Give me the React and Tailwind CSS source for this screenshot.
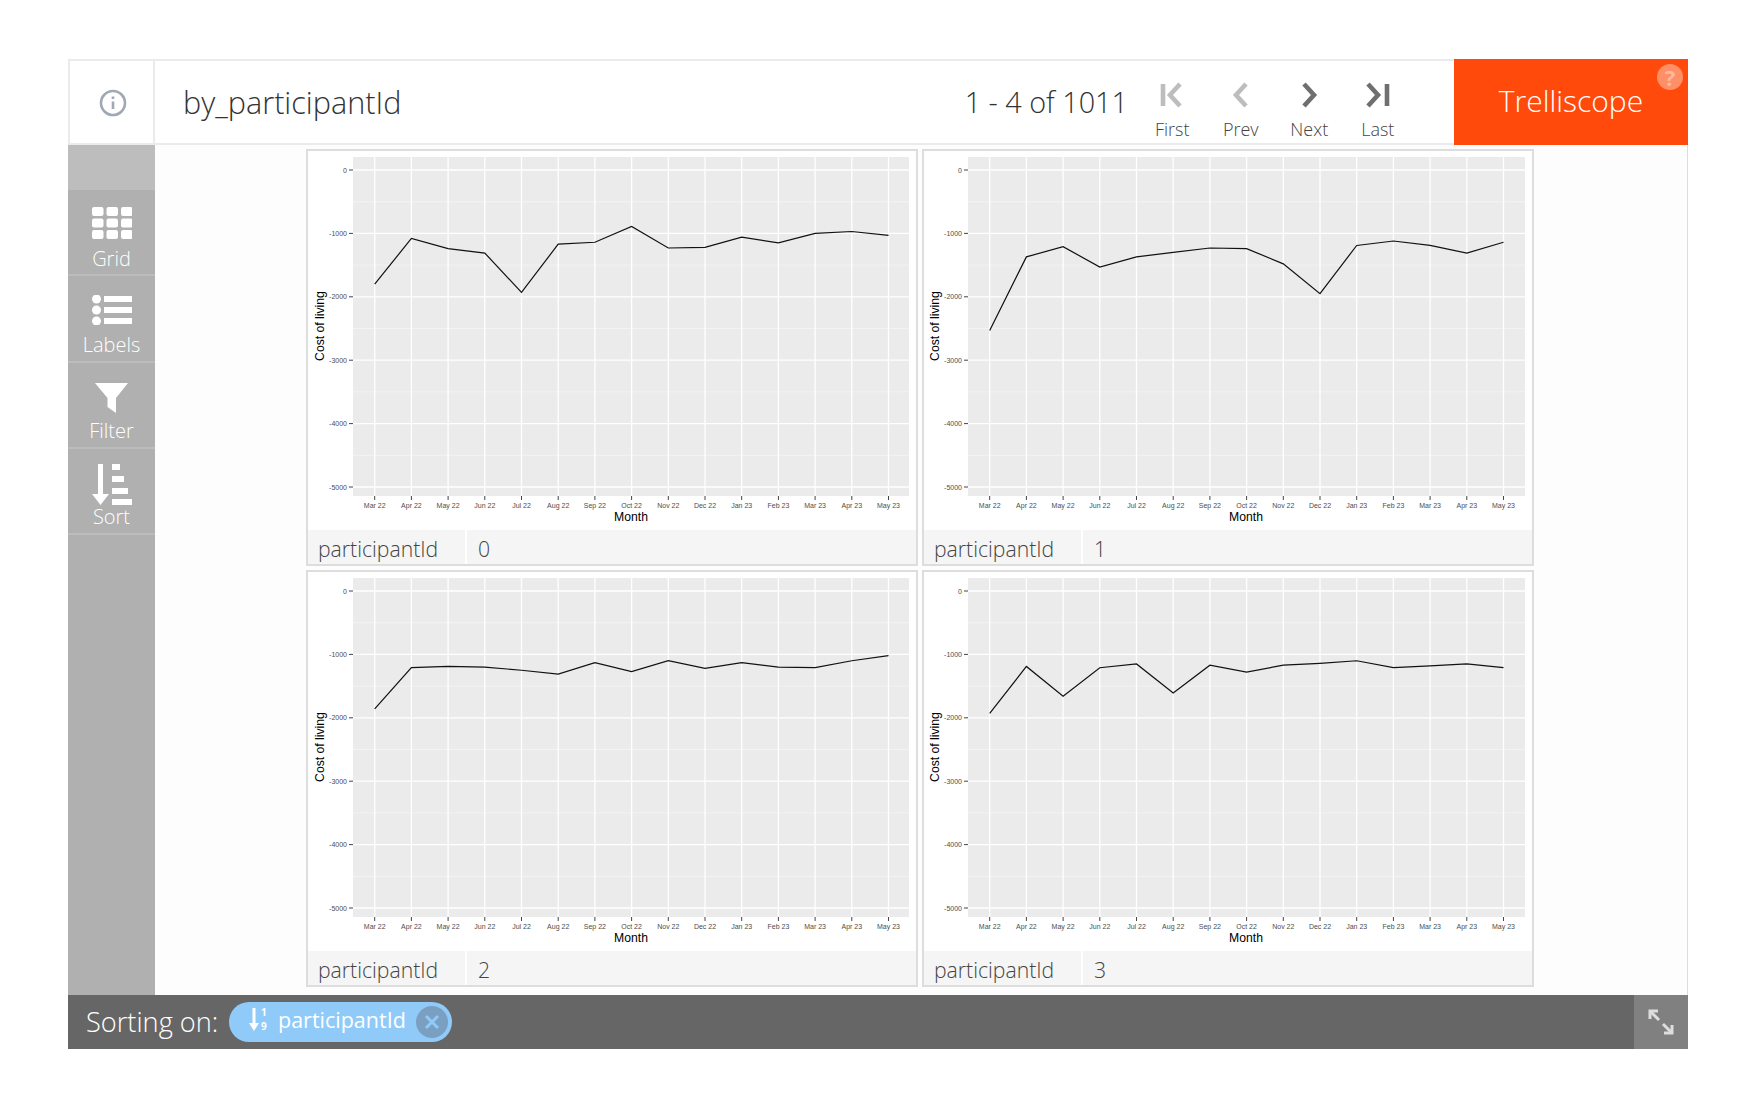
import React from "react";

const months = ["Mar 22","Apr 22","May 22","Jun 22","Jul 22","Aug 22","Sep 22","Oct 22","Nov 22","Dec 22","Jan 23","Feb 23","Mar 23","Apr 23","May 23"];
const panels = [
  { id: 0, d: [-1800,-1080,-1240,-1310,-1930,-1170,-1140,-890,-1230,-1220,-1060,-1150,-1000,-970,-1030] },
  { id: 1, d: [-2530,-1370,-1210,-1530,-1370,-1300,-1230,-1240,-1480,-1950,-1190,-1120,-1190,-1310,-1140] },
  { id: 2, d: [-1860,-1210,-1190,-1200,-1250,-1310,-1130,-1270,-1100,-1220,-1130,-1200,-1210,-1100,-1020] },
  { id: 3, d: [-1930,-1190,-1660,-1210,-1150,-1610,-1170,-1280,-1170,-1140,-1100,-1210,-1180,-1150,-1210] },
];
const X = (i) => 66.7 + 36.7 * i;
const Y = (v) => 19 + (-v / 1000) * 63.4;

function Chart({ data, vx }) {
  const ticks = [0, -1000, -2000, -3000, -4000, -5000];
  const right = 601 + vx;
  return (
    <svg width="608" height="379" viewBox={`${vx} 0 608 379`} className="block font-['Liberation_Sans',sans-serif]">
      <rect x="45" y="6" width={right - 45} height="339" fill="#ebebeb" />
      {ticks.slice(0, 5).map((t) => (
        <line key={t} x1="45" x2={right} y1={Y(t - 500)} y2={Y(t - 500)} stroke="#f5f5f5" strokeWidth="0.8" />
      ))}
      {ticks.map((t) => (
        <g key={t}>
          <line x1="45" x2={right} y1={Y(t)} y2={Y(t)} stroke="#ffffff" strokeWidth="1.3" />
          <line x1="41" x2="45" y1={Y(t)} y2={Y(t)} stroke="#444444" strokeWidth="1" />
          <text x="39" y={Y(t) + 2.5} textAnchor="end" fontSize="7" fill="#4d4d4d">{t}</text>
        </g>
      ))}
      {months.map((m, i) => (
        <g key={i}>
          <line x1={X(i)} x2={X(i)} y1="6" y2="345" stroke="#ffffff" strokeWidth="1.3" />
          <line x1={X(i)} x2={X(i)} y1="345" y2="349" stroke="#444444" strokeWidth="1" />
          <text x={X(i)} y="356.5" textAnchor="middle" fontSize="7" fill="#4d4d4d">{m}</text>
        </g>
      ))}
      <polyline points={data.map((v, i) => `${X(i)},${Y(v)}`).join(" ")} fill="none" stroke="#111111" strokeWidth="1.2" />
      <text x="323" y="370" textAnchor="middle" fontSize="12.2" fill="#000000">Month</text>
      <text transform="translate(16 175) rotate(-90)" textAnchor="middle" fontSize="12.2" fill="#000000">Cost of living</text>
    </svg>
  );
}

function Panel({ p }) {
  return (
    <div className="w-[612px] h-[417px] border-2 border-[#dddddd] bg-white flex flex-col">
      <div className="h-[379px]"><Chart data={p.d} vx={p.id % 2 ? 1 : 0} /></div>
      <div className="mt-auto h-[34px] bg-[#f5f5f5] flex items-center text-[21.2px] font-light text-[#444444] leading-none">
        <div className="w-[159px] h-full pl-[10px] pt-[4px] flex items-center border-r-2 border-white">participantId</div>
        <div className="pl-[11px] pt-[4px]">{p.id}</div>
      </div>
    </div>
  );
}

const icons = {
  Grid: (
    <svg width="40" height="32" viewBox="0 0 40 32" fill="#ffffff">
      {[0, 11.5, 23].map((y) => [0, 14.5, 29].map((x) => <rect key={x + "-" + y} x={x} y={y} width="11.5" height="9" rx="2" />))}
    </svg>
  ),
  Labels: (
    <svg width="40" height="30" viewBox="0 0 40 30" fill="#ffffff">
      {[4, 15, 26].map((y) => (
        <g key={y}>
          <circle cx="4.5" cy={y} r="4.5" />
          <rect x="12" y={y - 3} width="28" height="6" />
        </g>
      ))}
    </svg>
  ),
  Filter: (
    <svg width="33" height="32" viewBox="0 0 33 32" fill="#ffffff">
      <path d="M0 0H33L21 15V30L12.5 24V15Z" />
    </svg>
  ),
  Sort: (
    <svg width="40" height="41" viewBox="0 0 40 41" fill="#ffffff">
      <path d="M6 0H11V30H17L8.5 41L0 30H6Z" />
      <rect x="20" y="0" width="8" height="6" />
      <rect x="20" y="12" width="12" height="6" />
      <rect x="20" y="24" width="16" height="6" />
      <rect x="20" y="35" width="20" height="6" />
    </svg>
  ),
};

const iconPad = { Grid: "pt-[2px]", Labels: "pt-[4px]", Filter: "pt-[5px]", Sort: "pt-0" };

function SideItem({ label }) {
  return (
    <div className="h-[86.25px] border-b-2 border-[#bcbcbc] flex flex-col items-center">
      <div className={`h-[44px] shrink-0 mt-[15px] flex items-start justify-center ${iconPad[label]}`}>{icons[label]}</div>
      <div className="-mt-[2.5px] text-[20px] leading-[24px] font-light text-white">{label}</div>
    </div>
  );
}

function PagerButton({ label, active, children }) {
  return (
    <div className="w-[68.5px] flex flex-col items-center">
      <svg width="36" height="28" viewBox="0 0 36 28" fill="none" stroke={active ? "#6f6f6f" : "#bdbdbd"} strokeWidth="4.6">{children}</svg>
      <div className="mt-[8px] text-[18px] leading-[24px] font-light text-[#444444]">{label}</div>
    </div>
  );
}

export default function App() {
  return (
    <div className="w-[1759px] h-[1099px] bg-white pt-[59px] pl-[68px] font-['Open_Sans',sans-serif] overflow-hidden">
      <div className="w-[1620px] h-[990px] flex flex-col">
        <header className="h-[86px] flex border-t-2 border-b-2 border-l-2 border-[#e9ecef]">
          <div className="w-[85px] pl-[2px] pt-[1px] border-r-2 border-[#e9ecef] flex items-center justify-center">
            <svg width="28" height="28" viewBox="0 0 28 28" fill="none" stroke="#a0a8b4" strokeWidth="2.6">
              <circle cx="14" cy="14" r="12" />
              <path d="M14 12.5V20" />
              <path d="M14 7.5V10" />
            </svg>
          </div>
          <div className="flex-1 flex items-center pl-[28px] text-[30.6px] font-light text-[#333333] leading-none">by_participantId</div>
          <div className="flex items-center text-[28.8px] font-light text-[#333333] leading-none mr-[10px]">1 - 4 of 1011</div>
          <div className="flex items-start pt-[20px] mr-[42px]">
            <PagerButton label="First">
              <path d="M9 3V25" /><path d="M26 3L16 14L26 25" />
            </PagerButton>
            <PagerButton label="Prev">
              <path d="M23 3L13 14L23 25" />
            </PagerButton>
            <PagerButton label="Next" active>
              <path d="M13 3L23 14L13 25" />
            </PagerButton>
            <PagerButton label="Last" active>
              <path d="M8 3L18 14L8 25" /><path d="M27 3V25" />
            </PagerButton>
          </div>
          <div className="-mt-[2px] -mb-[2px] w-[234px] bg-[#ff4a0b] relative flex items-center justify-center text-[30px] font-light text-white leading-none pb-[2px]">
            Trelliscope
            <div className="absolute top-[5px] right-[5px] w-[26px] h-[26px] rounded-full bg-[#ff8f66] flex items-center justify-center text-[22px] font-bold text-[#ffb89e]">?</div>
          </div>
        </header>
        <div className="flex-1 flex border-r border-[#dddddd] bg-[#fdfdfd]">
          <aside className="w-[87px] bg-[#b0b0b0] flex flex-col">
            <div className="h-[45px] bg-[#bdbdbd]" />
            {["Grid", "Labels", "Filter", "Sort"].map((l) => <SideItem key={l} label={l} />)}
          </aside>
          <main className="pl-[151px] pt-[4px]">
            <div className="grid grid-cols-[612px_612px] gap-x-[4px] gap-y-[4px]">
              {panels.map((p) => <Panel key={p.id} p={p} />)}
            </div>
          </main>
        </div>
        <footer className="h-[54px] bg-[#666666] flex items-center">
          <div className="pl-[18px] w-[161px] pb-[1px] text-[27.2px] font-light text-white leading-none">Sorting on:</div>
          <div className="w-[223px] h-[40px] rounded-full bg-[#90caf9] flex items-center relative">
            <svg width="24" height="28" viewBox="0 0 24 28" className="ml-[20px] -mt-[4px] font-['Open_Sans',sans-serif]" fill="#ffffff">
              <path d="M3.5 2H6.5V17H10L5 25L0 17H3.5Z" />
              <text x="12" y="10" fontSize="10" fontWeight="700">1</text>
              <text x="12" y="24" fontSize="10" fontWeight="700">9</text>
            </svg>
            <span className="ml-[5px] -mt-[5px] text-[21.5px] leading-none text-white">participantId</span>
            <div className="absolute right-[4px] top-[4px] w-[32px] h-[32px] rounded-full bg-[#7a9fc0] flex items-center justify-center">
              <svg width="16" height="16" viewBox="0 0 16 16" stroke="#90caf9" strokeWidth="3"><path d="M2 2L14 14M14 2L2 14" /></svg>
            </div>
          </div>
          <div className="ml-auto w-[54px] h-full bg-[#808080] flex items-center justify-center">
            <svg width="26" height="26" viewBox="0 0 26 26" fill="none" stroke="#dddddd" strokeWidth="3">
              <path d="M2 10V2H10" /><path d="M2 2L11 11" /><path d="M24 16V24H16" /><path d="M15 15L24 24" />
            </svg>
          </div>
        </footer>
      </div>
    </div>
  );
}
